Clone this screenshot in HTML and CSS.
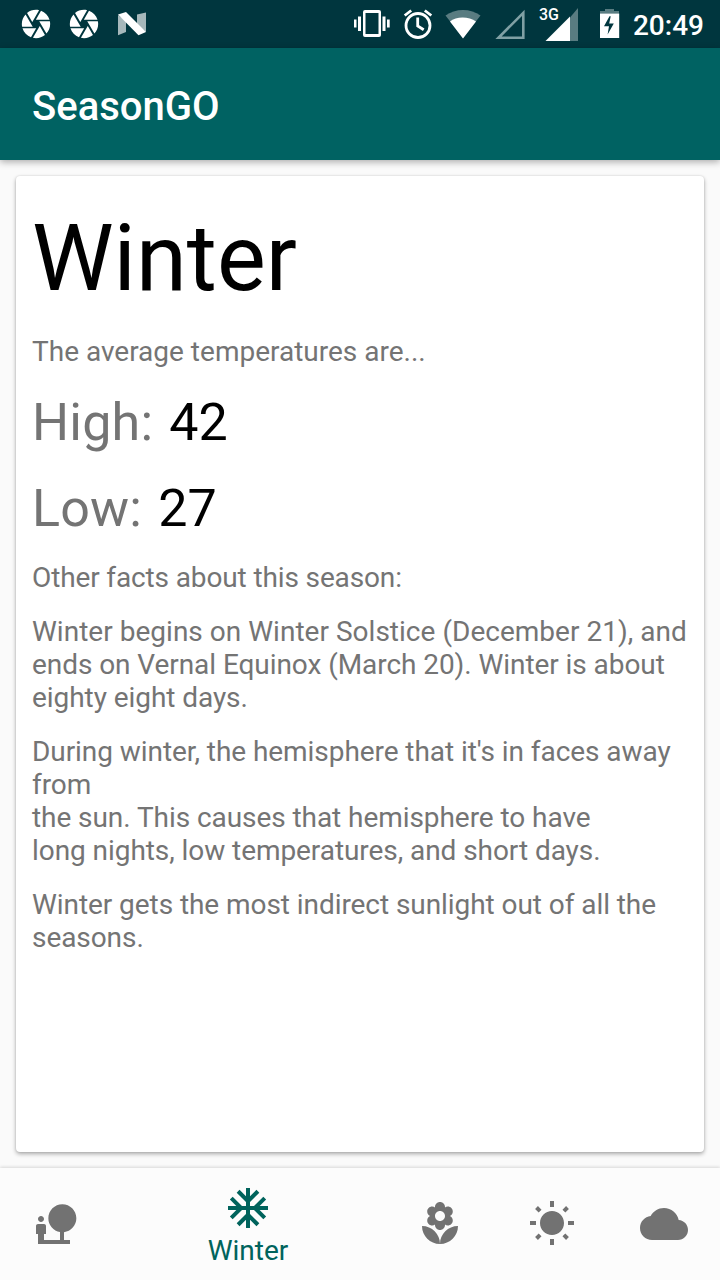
FILE: index.html
```html
<!DOCTYPE html>
<html lang="en">
<head>
<meta charset="utf-8">
<title>SeasonGO</title>
<link rel="stylesheet" href="styles.css">
</head>
<body>
<div class="screen">
  <header class="status">
    <div class="status-left">
      <svg class="aperture" viewBox="0 0 24 24"><path d="M9.4 10.5l4.77-8.26C13.47 2.09 12.75 2 12 2c-2.4 0-4.6.85-6.32 2.25l3.66 6.35.06-.1zM21.54 9c-.92-2.92-3.15-5.26-6-6.34L11.88 9h9.66zm.26 1h-7.49l.29.5 4.76 8.25C21 16.97 22 14.61 22 12c0-.69-.07-1.35-.2-2zM8.54 12l-3.9-6.75C3.01 7.03 2 9.39 2 12c0 .69.07 1.35.2 2h7.49l-1.15-2zm-6.08 3c.92 2.92 3.15 5.26 6 6.34L12.12 15H2.46zm11.27 0l-3.9 6.76c.7.15 1.42.24 2.17.24 2.4 0 4.6-.85 6.32-2.25l-3.66-6.35-.93 1.6z"/></svg>
      <svg class="aperture" viewBox="0 0 24 24"><path d="M9.4 10.5l4.77-8.26C13.47 2.09 12.75 2 12 2c-2.4 0-4.6.85-6.32 2.25l3.66 6.35.06-.1zM21.54 9c-.92-2.92-3.15-5.26-6-6.34L11.88 9h9.66zm.26 1h-7.49l.29.5 4.76 8.25C21 16.97 22 14.61 22 12c0-.69-.07-1.35-.2-2zM8.54 12l-3.9-6.75C3.01 7.03 2 9.39 2 12c0 .69.07 1.35.2 2h7.49l-1.15-2zm-6.08 3c.92 2.92 3.15 5.26 6 6.34L12.12 15H2.46zm11.27 0l-3.9 6.76c.7.15 1.42.24 2.17.24 2.4 0 4.6-.85 6.32-2.25l-3.66-6.35-.93 1.6z"/></svg>
      <svg class="nougat" width="34" height="48" viewBox="0 0 34 48"><path class="shade" d="M4 15l8 6v11l-8 3.300zM23 14.500l9-2v19.500l-9-7z"/><path d="M4 14.500l8-2.500 20 20-7.500 3.200z"/></svg>
    </div>
    <div class="status-right">
      <svg width="36" height="48" viewBox="354 0 36 48"><path fill-rule="evenodd" d="M365 10h14a2 2 0 0 1 2 2v23a2 2 0 0 1-2 2h-14a2 2 0 0 1-2-2V12a2 2 0 0 1 2-2zm.5 3v21h13V13zM354 19.500h2.500v8H354zM358 16.500h3v14.500h-3zM382.500 16.500h3v14.500h-3zM387 19.500h2.700v8H387z"/></svg>
      <svg class="alarm" width="30" height="48" viewBox="403 0 30 48"><g class="line"><circle cx="418" cy="25.500" r="12"/><path d="M417.700 17.500v8.500l6 3.700"/><path d="M404.700 15.500l6.500-5M431.300 15.500l-6.500-5"/></g></svg>
      <svg class="wifi" width="36" height="48" viewBox="445 0 36 48"><path class="shade" d="M463 38L445.500 15.500C455 8 471 8 480.500 15.500z"/><path d="M463 38.500l-13-17C456 16 469 16 476 21.500z"/></svg>
      <svg class="signal-empty" width="30" height="48" viewBox="495 0 30 48"><path class="outline" d="M498.500 37.800h24.800v-25z"/></svg>
      <div class="network">
        <svg width="40" height="48" viewBox="539 0 40 48"><path class="shade" d="M570 17.500l8-9.500v33h-8z"/><path d="M545.500 41L570 16.500V41z"/></svg>
        <span class="network-type">3G</span>
      </div>
      <svg class="battery" width="20" height="48" viewBox="600 0 20 48"><path class="shade" d="M600 13.500v-2.500h5V9h9v2h5v2.500z"/><path fill-rule="evenodd" d="M600 13.500h19.200V38H600zm9.500 2.700l-5.500 10h5l-1.400 8.300 6.200-11h-4.600l1.500-7.300z"/></svg>
      <span class="clock">20:49</span>
    </div>
  </header>
  <div class="toolbar"><h1 class="app-title">SeasonGO</h1></div>
  <main class="content">
    <section class="card">
      <h2 class="season">Winter</h2>
      <p class="intro">The average temperatures are...</p>
      <div class="temps">
        <div class="temp">High: <span class="value">42</span></div>
        <div class="temp">Low: <span class="value">27</span></div>
      </div>
      <div class="facts">
        <p class="facts-title">Other facts about this season:</p>
        <p><span class="loose">Winter begins on Winter Solstice (December 21), and</span><br>ends on Vernal Equinox (March 20). Winter is about<br>eighty eight days.</p>
        <p>During winter, the hemisphere that it's in faces away<br>from<br>the sun. This causes that hemisphere to have<br>long nights, low temperatures, and short days.</p>
        <p>Winter gets the most indirect sunlight out of all the<br>seasons.</p>
      </div>
    </section>
  </main>
  <nav class="bottom-nav">
    <a class="tab"><svg viewBox="0 0 24 24"><path d="M22.170 9.170c0-3.870-3.130-7-7-7s-7 3.130-7 7A6.980 6.980 0 0 0 14 16.060V20H6v-3h1v-4c0-.55-.45-1-1-1H3c-.55 0-1 .45-1 1v4h1v5h16v-2h-3v-3.880c3.470-.4 6.170-3.360 6.170-6.950zM4.500 11c.83 0 1.500-.67 1.500-1.500S5.330 8 4.500 8 3 8.670 3 9.500 3.670 11 4.500 11z"/></svg></a>
    <a class="tab active"><svg viewBox="0 0 24 24"><path d="M22 11h-4.170l3.240-3.240-1.410-1.420L15 11h-2V9l4.660-4.660-1.420-1.410L13 6.170V2h-2v4.170L7.760 2.930 6.340 4.340 11 9v2H9L4.340 6.340 2.930 7.760 6.170 11H2v2h4.170l-3.240 3.240 1.410 1.420L9 13h2v2l-4.660 4.660 1.420 1.410L11 17.830V22h2v-4.170l3.240 3.240 1.420-1.410L13 15v-2h2l4.660 4.660 1.410-1.420L17.830 13H22z"/></svg><span class="tab-label">Winter</span></a>
    <a class="tab"><svg viewBox="0 0 24 24"><path d="M12 22c4.970 0 9-4.030 9-9-4.970 0-9 4.030-9 9zM5.600 10.250c0 1.380 1.120 2.500 2.500 2.500.53 0 1.010-.16 1.420-.44l-.02.19c0 1.380 1.120 2.500 2.500 2.500s2.500-1.120 2.500-2.500l-.02-.19c.4.28.89.44 1.420.44 1.380 0 2.500-1.120 2.500-2.500 0-1-.59-1.850-1.430-2.250.84-.4 1.430-1.250 1.430-2.250 0-1.380-1.120-2.500-2.500-2.500-.53 0-1.010.16-1.420.44l.02-.19C14.500 2.120 13.380 1 12 1S9.500 2.120 9.500 3.500l.02.19c-.4-.28-.89-.44-1.420-.44-1.380 0-2.500 1.120-2.500 2.500 0 1 .59 1.850 1.430 2.250-.84.4-1.430 1.250-1.430 2.250zM12 5.500c1.380 0 2.500 1.120 2.500 2.500s-1.120 2.500-2.500 2.500S9.500 9.380 9.500 8s1.120-2.500 2.500-2.500zM3 13c0 4.970 4.030 9 9 9 0-4.970-4.030-9-9-9z"/></svg></a>
    <a class="tab"><svg viewBox="0 0 24 24"><path d="M6.760 4.840l-1.800-1.790-1.410 1.410 1.790 1.790 1.420-1.410zM4 10.500H1v2h3v-2zm9-9.950h-2V3.500h2V.55zm7.450 3.910l-1.410-1.410-1.790 1.790 1.410 1.410 1.790-1.790zm-3.210 13.700l1.790 1.800 1.410-1.410-1.800-1.790-1.400 1.400zM20 10.500v2h3v-2h-3zm-8-5c-3.310 0-6 2.690-6 6s2.690 6 6 6 6-2.690 6-6-2.690-6-6-6zm-1 16.950h2V19.500h-2v2.950zm-7.450-3.910l1.410 1.410 1.790-1.800-1.410-1.410-1.790 1.800z"/></svg></a>
    <a class="tab"><svg viewBox="0 0 24 24"><path d="M19.350 10.040C18.670 6.590 15.640 4 12 4 9.110 4 6.600 5.640 5.350 8.040 2.340 8.360 0 10.910 0 14c0 3.310 2.690 6 6 6h13c2.760 0 5-2.240 5-5 0-2.640-2.050-4.780-4.650-4.960z"/></svg></a>
  </nav>
</div>
</body>
</html>
```
FILE: styles.css
```css
* { box-sizing: border-box; }
body, h1, h2, p { margin: 0; }
body { font-family: Roboto, "Liberation Sans", sans-serif; background: #fafafa; }
svg { display: block; flex: none; }

.screen { width: 720px; height: 1280px; display: flex; flex-direction: column; overflow: hidden; background: #fafafa; }

.status { height: 48px; flex: none; display: flex; justify-content: space-between; align-items: center; background: #00363e; color: #fff; fill: #fff; }
.status-left { display: flex; align-items: center; padding-left: 19px; gap: 14px; }
.aperture { width: 34px; height: 34px; }
.status .shade { fill: #fff; opacity: .5; }
.nougat { margin-left: -1px; }
.nougat .shade { opacity: .65; }
.wifi .shade, .network .shade, .battery .shade { opacity: .35; }
.status-right { display: flex; align-items: center; padding-right: 16px; }
.alarm { margin-left: 13px; }
.alarm .line { fill: none; stroke: #fff; stroke-width: 2.800; }
.wifi { margin-left: 12px; }
.signal-empty { margin-left: 14px; }
.signal-empty .outline { fill: none; stroke: #7fa0a4; stroke-width: 2.600; }
.network { position: relative; margin-left: 14px; }
.network-type { position: absolute; left: 0; top: 5px; font-size: 16px; line-height: 19px; font-weight: 500; }
.battery { margin-left: 21px; }
.clock { margin-left: 13px; font-size: 28px; line-height: 34px; font-weight: 500; padding-top: 3px; }

.toolbar { height: 112px; flex: none; display: flex; align-items: center; padding: 6px 32px 0; background: #006262; box-shadow: 0 2px 7px rgba(0, 0, 0, .32); z-index: 1; }
.app-title { color: #fff; font-size: 40px; line-height: 48px; font-weight: 500; }

.content { flex: 1; min-height: 0; display: flex; padding: 16px; }
.card { flex: 1; padding: 29px 16px 0; background: #fff; border-radius: 4px; box-shadow: 0 2px 4px rgba(0, 0, 0, .32), 0 0 2px rgba(0, 0, 0, .12); color: #747474; font-size: 28px; line-height: 33px; white-space: nowrap; }
.season { color: #000; font-size: 92px; line-height: 108px; font-weight: 400; }
.intro { margin-top: 22px; }
.temps { display: flex; flex-direction: column; gap: 25px; margin-top: 24px; }
.temp { font-size: 52px; line-height: 61px; letter-spacing: .2px; }
.value { margin-left: 3px; color: #000; letter-spacing: 0; }
.facts { display: flex; flex-direction: column; gap: 21px; margin-top: 22px; letter-spacing: -.065px; }
.facts-title { letter-spacing: -.13px; }
.loose { letter-spacing: .02px; }

.bottom-nav { height: 112px; flex: none; display: grid; grid-template-columns: 112px 272px 112px 112px 112px; background: #fcfcfc; box-shadow: 0 -1px 3px rgba(0, 0, 0, .14); }
.tab { display: flex; flex-direction: column; align-items: center; padding-top: 32px; fill: #727272; }
.tab svg { width: 48px; height: 48px; }
.tab.active { padding-top: 16px; fill: #00635c; color: #00635c; }
.tab-label { margin-top: 2px; font-size: 28px; line-height: 33px; }
```
